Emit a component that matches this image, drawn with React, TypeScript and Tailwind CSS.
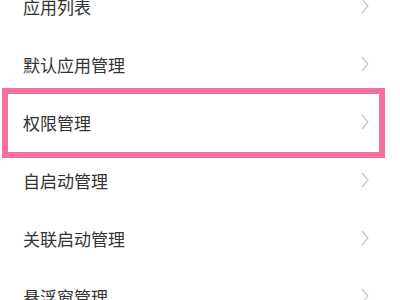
const items = ["应用列表", "默认应用管理", "权限管理", "自启动管理", "关联启动管理", "悬浮窗管理"];

function Chevron() {
  return (
    <svg width="8" height="16" viewBox="0 0 8 16" fill="none" className="relative -top-[1px] shrink-0">
      <polyline points="1,1 7,8 1,15" stroke="#c6c6c6" strokeWidth="1.2" />
    </svg>
  );
}

export default function App() {
  return (
    <div
      className="w-[400px] h-[300px] overflow-hidden bg-white"
      style={{ fontFamily: '"Noto Sans CJK SC", "Noto Sans", sans-serif' }}
    >
      <div className="-mt-[22px] flex flex-col">
        {items.map((label, i) => (
          <div key={label} className="relative flex h-[58px] items-center justify-between pl-[23px] pr-[31px]">
            <span className="relative -top-[1px] text-[17px] leading-none text-[#333333]">{label}</span>
            <Chevron />
            {i === 2 && (
              <span className="pointer-events-none absolute -top-[6px] -bottom-[6px] left-[2px] right-[15px] border-[6px] border-[#f6709a]" />
            )}
          </div>
        ))}
      </div>
    </div>
  );
}
